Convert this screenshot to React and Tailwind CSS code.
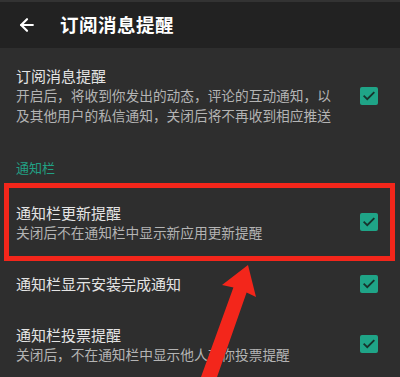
import React from 'react';
import { ArrowLeft } from 'lucide-react';

const Check = () => (
  <div className="w-[18px] h-[18px] rounded-[2px] bg-[#1fa487] flex items-center justify-center shrink-0">
    <svg width="14" height="14" viewBox="0 0 24 24" fill="none">
      <path d="M4 12.5l5 5L20 6.5" stroke="#17332c" strokeWidth="3.2" strokeLinecap="square" />
    </svg>
  </div>
);

const Row = ({ title, desc, className = '', children }) => (
  <div className={`relative flex items-center pl-4 pr-[22px] ${className}`}>
    <div className="flex-1 min-w-0">
      <div className="text-[15px] leading-[19px] text-[#e4e4e4]">{title}</div>
      {desc && (
        <div className="text-[13.7px] leading-[20px] text-[#b4b4b4]">{desc}</div>
      )}
    </div>
    <Check />
    {children}
  </div>
);

export default function App() {
  return (
    <div
      className="relative w-[400px] h-[377px] overflow-hidden bg-[#2e2e2e]"
      style={{ fontFamily: '"Noto Sans CJK SC", "Noto Sans", sans-serif' }}
    >
      {/* header */}
      <div className="h-[48px] bg-[#222222] border-t-2 border-[#333333] flex items-center pl-[17px]">
        <ArrowLeft size={20} strokeWidth={2.6} className="text-white" />
        <div className="ml-[23px] text-[18.5px] font-bold text-white tracking-[0.5px]">订阅消息提醒</div>
      </div>

      <Row
        title="订阅消息提醒"
        desc={<>开启后，将收到你发出的动态，评论的互动通知，以<br />及其他用户的私信通知，关闭后将不再收到相应推送</>}
        className="pt-[18px] pb-[14px]"
      />

      <div className="pl-4 pt-[20px] h-[44px] text-[13px] leading-[18px] text-[#22a084]">通知栏</div>

      <Row
        title="通知栏更新提醒"
        desc="关闭后不在通知栏中显示新应用更新提醒"
        className="h-[78px]"
      >
        <div className="absolute left-[4px] top-0 right-[5px] bottom-0 border-[5px] border-[#f3261b] pointer-events-none" />
      </Row>

      <Row title="通知栏显示安装完成通知" className="h-[45px]" />

      <Row
        title="通知栏投票提醒"
        desc="关闭后，不在通知栏中显示他人对你投票提醒"
        className="h-[76px]"
      />

      {/* annotation arrow */}
      <svg className="absolute left-0 top-0 pointer-events-none" width="400" height="377" viewBox="0 0 400 377">
        <polygon
          points="248,265 256,297 246.6,292.4 216,380 201,377 233.4,287.6 222,285"
          fill="#f3261b"
        />
      </svg>
    </div>
  );
}
